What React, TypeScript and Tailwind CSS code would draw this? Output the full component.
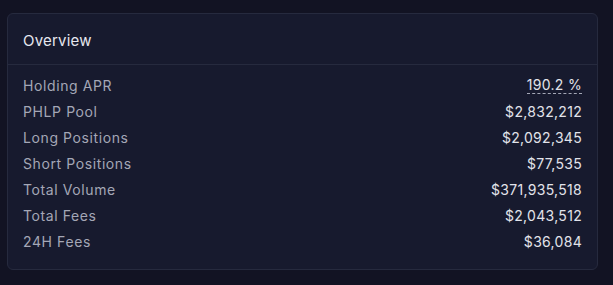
const rows: { label: string; value: string; dashed?: boolean }[] = [
  { label: "Holding APR", value: "190.2 %", dashed: true },
  { label: "PHLP Pool", value: "$2,832,212" },
  { label: "Long Positions", value: "$2,092,345" },
  { label: "Short Positions", value: "$77,535" },
  { label: "Total Volume", value: "$371,935,518" },
  { label: "Total Fees", value: "$2,043,512" },
  { label: "24H Fees", value: "$36,084" },
];

export default function App() {
  return (
    <div
      className="w-[613px] h-[285px] bg-[#121323] pt-[13px] pl-[7px] pr-[15px]"
      style={{ fontFamily: "Inter, 'Noto Sans', sans-serif" }}
    >
      <div className="h-[257px] rounded-[6px] border border-[#262a3e] bg-[#171a2e]">
        <div className="px-[15px] pt-[17px] pb-[13px] border-b border-[#262a3e]">
          <div className="text-[15px] leading-5 text-[#e6e7ee] tracking-[0.2px]">Overview</div>
        </div>
        <div className="px-[15px] pt-[7px] pb-[13px]">
          {rows.map((r) => (
            <div key={r.label} className="flex items-center justify-between h-[26px] text-[14px]">
              <span className="text-[#a4a7b6] tracking-[0.6px]">{r.label}</span>
              <span
                className={
                  r.dashed
                    ? "text-[#e2e3ea] tracking-[0.3px] border-b border-dashed border-[#a4a7b6] leading-[17px]"
                    : "text-[#e2e3ea] tracking-[0.3px]"
                }
              >
                {r.value}
              </span>
            </div>
          ))}
        </div>
      </div>
    </div>
  );
}
